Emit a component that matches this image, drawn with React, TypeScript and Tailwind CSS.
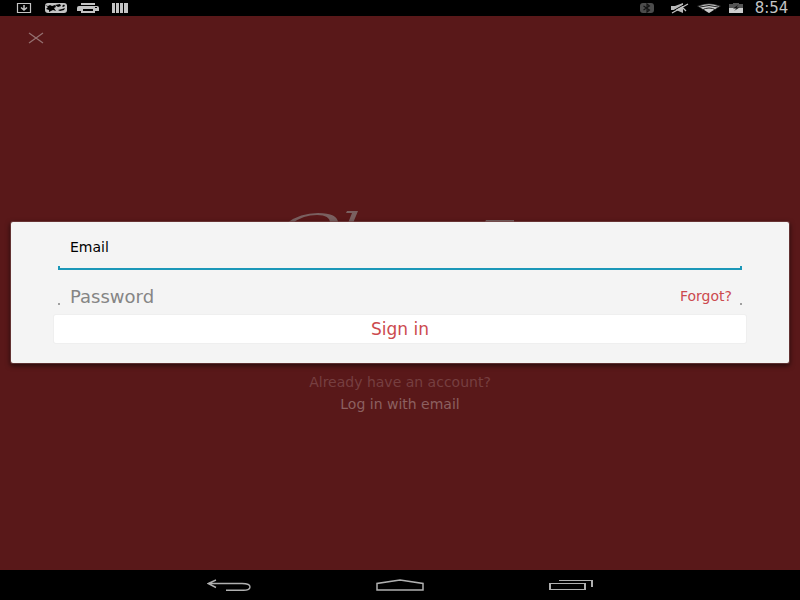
import React from "react";

function StatusBar() {
  return (
    <header className="flex h-4 items-center justify-between bg-black px-2 text-[#c4c4c4]">
      <div className="flex items-center pl-2">
        <svg className="mr-3" width="16" height="12" viewBox="0 0 16 12" fill="none" stroke="currentColor" aria-label="Download">
          <path d="M1 1.500H15M1 10.500H15" strokeWidth="1" />
          <path d="M1.500 1v10M14.500 1v10" strokeWidth="1.200" />
          <path d="M8 3v5M5 5.500l3 2.500 3-2.500" strokeWidth="1.500" />
        </svg>
        <svg className="mr-2" width="24" height="12" viewBox="0 0 24 12" aria-label="Photos">
          <rect x="1" y="1" width="22" height="10" rx="3" fill="currentColor" />
          <path d="M1 3l3 1 2-1 2 1 3-1 1 2-2 1 2 3-3-1-4 2 0-2-3-1 2-2zM11 3l5-1 1 2-3 1zM18 4l2-1.500 1 1.500-2 1zM14 8l4-1 3-1-1 2-4 1z" fill="#000" />
        </svg>
        <svg className="mr-3" width="24" height="12" viewBox="0 0 24 12" aria-label="Printer">
          <path d="M5 1h14v2H5z" fill="currentColor" />
          <path d="M3 4h18q2 0 2 2v3H1V6q0-2 2-2z" fill="currentColor" />
          <path d="M5 7h14v4H5z" fill="currentColor" />
          <path d="M7 7h10v2H7z" fill="#000" />
          <path d="M19 5h2v1h-2z" fill="#000" />
        </svg>
        <svg width="16" height="12" viewBox="0 0 16 12" fill="currentColor" aria-label="Barcode">
          <path d="M0 1h3v10H0zM4 1h3v10H4zM8 1h3v10H8zM12 1h4v10h-4z" />
        </svg>
      </div>
      <div className="flex items-center">
        <svg className="mr-4" width="16" height="12" viewBox="0 0 16 12" aria-label="Bluetooth">
          <rect x="1" y="1" width="14" height="10" rx="3" fill="#4c4c4c" />
          <path d="M4.500 4l6 4L8 10V2l2.500 2-6 4" fill="none" stroke="#111" strokeWidth="1.100" />
        </svg>
        <svg className="mr-2" width="18" height="12" viewBox="0 0 18 12" aria-label="Muted">
          <path d="M0 4h4l8-3v10L5 8H0z" fill="#b8b8b8" />
          <path d="M0 10L16 1" stroke="#000" strokeWidth="1" />
          <path d="M1 11L17 2M12 6l3 3" stroke="#c4c4c4" strokeWidth="1.200" />
        </svg>
        <svg className="mr-2" width="24" height="12" viewBox="0 0 24 12" aria-label="Wi-Fi">
          <path d="M0 4Q12-1 24 4L12 11z" fill="#444" />
          <path d="M2 4.500Q12 0 22 4.500L12 11z" fill="#ccc" />
          <path d="M3 5Q12 2 21 5M5 8Q12 4 19 8" fill="none" stroke="#222" />
        </svg>
        <svg className="mr-2" width="14" height="12" viewBox="0 0 14 12" aria-label="Battery">
          <path d="M0 2h4V1h6v1h4v4H0z" fill="#555" />
          <path d="M0 6h14v5H0z" fill="#ccc" />
          <path d="M9 3L4 6.500h3.500L5 9l5.500-3.500H7.500z" fill="#111" />
        </svg>
        <time className="w-[41px] text-center text-[15px] leading-4">8:54</time>
      </div>
    </header>
  );
}

function FieldEdges({ color }: { color: string }) {
  return (
    <span className="flex h-[2px] justify-between" aria-hidden="true">
      <span className={"w-[2px] " + color} />
      <span className={"w-[2px] " + color} />
    </span>
  );
}

function SignInDialog() {
  return (
    <form
      role="dialog"
      aria-label="Sign in"
      onSubmit={(e) => e.preventDefault()}
      className="w-full rounded-[2px] bg-[#f4f4f4] px-[43px] pt-3 pb-5 shadow-[0_2px_5px_1px_rgba(0,0,0,0.55)] ring-1 ring-[#7c4a4a]/60"
    >
      <div className="px-1">
        <label className="block">
          <input
            type="email"
            aria-label="Email"
            placeholder="Email"
            className="block h-[26px] w-full bg-transparent px-3 text-[14px] outline-none placeholder:text-black"
          />
          <span className="block h-[6px]" />
          <FieldEdges color="bg-[#1b97b8]" />
          <span className="block h-[2px] bg-[#1b97b8]" />
        </label>
        <div className="mt-[14px] flex h-[26px] items-center pr-[10px] pl-3">
          <input
            type="password"
            aria-label="Password"
            placeholder="Password"
            className="h-full min-w-0 flex-1 bg-transparent text-[18px] outline-none placeholder:text-[#858585]"
          />
          <a href="#forgot" className="text-[14px] text-[#cc4a4e]">
            Forgot?
          </a>
        </div>
        <div className="-mt-[7px]">
          <FieldEdges color="bg-[#a0a0a0]" />
        </div>
      </div>
      <button
        type="submit"
        className="mt-[10px] block h-[28px] w-full rounded-[2px] bg-white text-[17px] leading-7 text-[#cc4a4e] ring-1 ring-[#efefef]"
      >
        Sign in
      </button>
    </form>
  );
}

function Backdrop() {
  return (
    <div className="flex flex-1 flex-col px-6 pt-4">
      <button type="button" aria-label="Close" className="flex w-6 justify-center text-[#957070]">
        <svg width="16" height="12" viewBox="0 0 16 12" fill="none" stroke="currentColor" strokeWidth="1.3">
          <path d="M1 1l14 10M15 1L1 11" />
        </svg>
      </button>
      <div className="flex flex-1 flex-col items-center justify-center pt-3 text-[14px] leading-[22px]">
        <svg width="228" height="160" viewBox="0 0 228 160" fill="#7a6060" aria-label="Logo">
          <path d="M1 12Q14 2 32 2Q52 2 52 12H44Q44 4 31 4Q17 4 7 12z" />
          <path d="M61 0H72L67 12H62L66 2H60z" />
          <path d="M200 9H228V11H199z" />
        </svg>
        <p className="text-[#763f40]">Already have an account?</p>
        <a href="#email" className="text-[#8c6060]">
          Log in with email
        </a>
      </div>
    </div>
  );
}

function NavigationBar() {
  return (
    <nav className="flex h-[30px] justify-center bg-black text-[#b0b0b0]">
      <button type="button" aria-label="Back" className="flex w-[171px] items-center justify-center">
        <svg width="44" height="12" viewBox="0 0 44 12" fill="none" stroke="currentColor" strokeWidth="1.4">
          <path d="M9 1L1 4.500l8 4M1 4.500h34q8 0 8 3.500T35 11.300H19" />
        </svg>
      </button>
      <button type="button" aria-label="Home" className="flex w-[171px] items-center justify-center">
        <svg width="48" height="12" viewBox="0 0 48 12" fill="none" stroke="currentColor" strokeWidth="1.500">
          <path d="M1 11V4.500L24 1l23 3.500V11z" />
        </svg>
      </button>
      <button type="button" aria-label="Recent apps" className="flex w-[171px] items-center justify-center">
        <svg width="44" height="12" viewBox="0 0 44 12" fill="none" stroke="currentColor">
          <path d="M0 4.500h37M0 10.500h37M10 1.500h34" strokeWidth="1" />
          <path d="M1 4v7M36 4v7M43 1v7" strokeWidth="2" />
        </svg>
      </button>
    </nav>
  );
}

export default function App() {
  return (
    <div className="flex min-h-screen flex-col bg-[#591819] font-['DejaVu_Sans',sans-serif]">
      <StatusBar />
      <main className="relative flex flex-1 flex-col">
        <Backdrop />
        <div className="pointer-events-none absolute inset-0 flex items-center px-[11px] pb-[2px]">
          <div className="pointer-events-auto w-full">
            <SignInDialog />
          </div>
        </div>
      </main>
      <NavigationBar />
    </div>
  );
}
